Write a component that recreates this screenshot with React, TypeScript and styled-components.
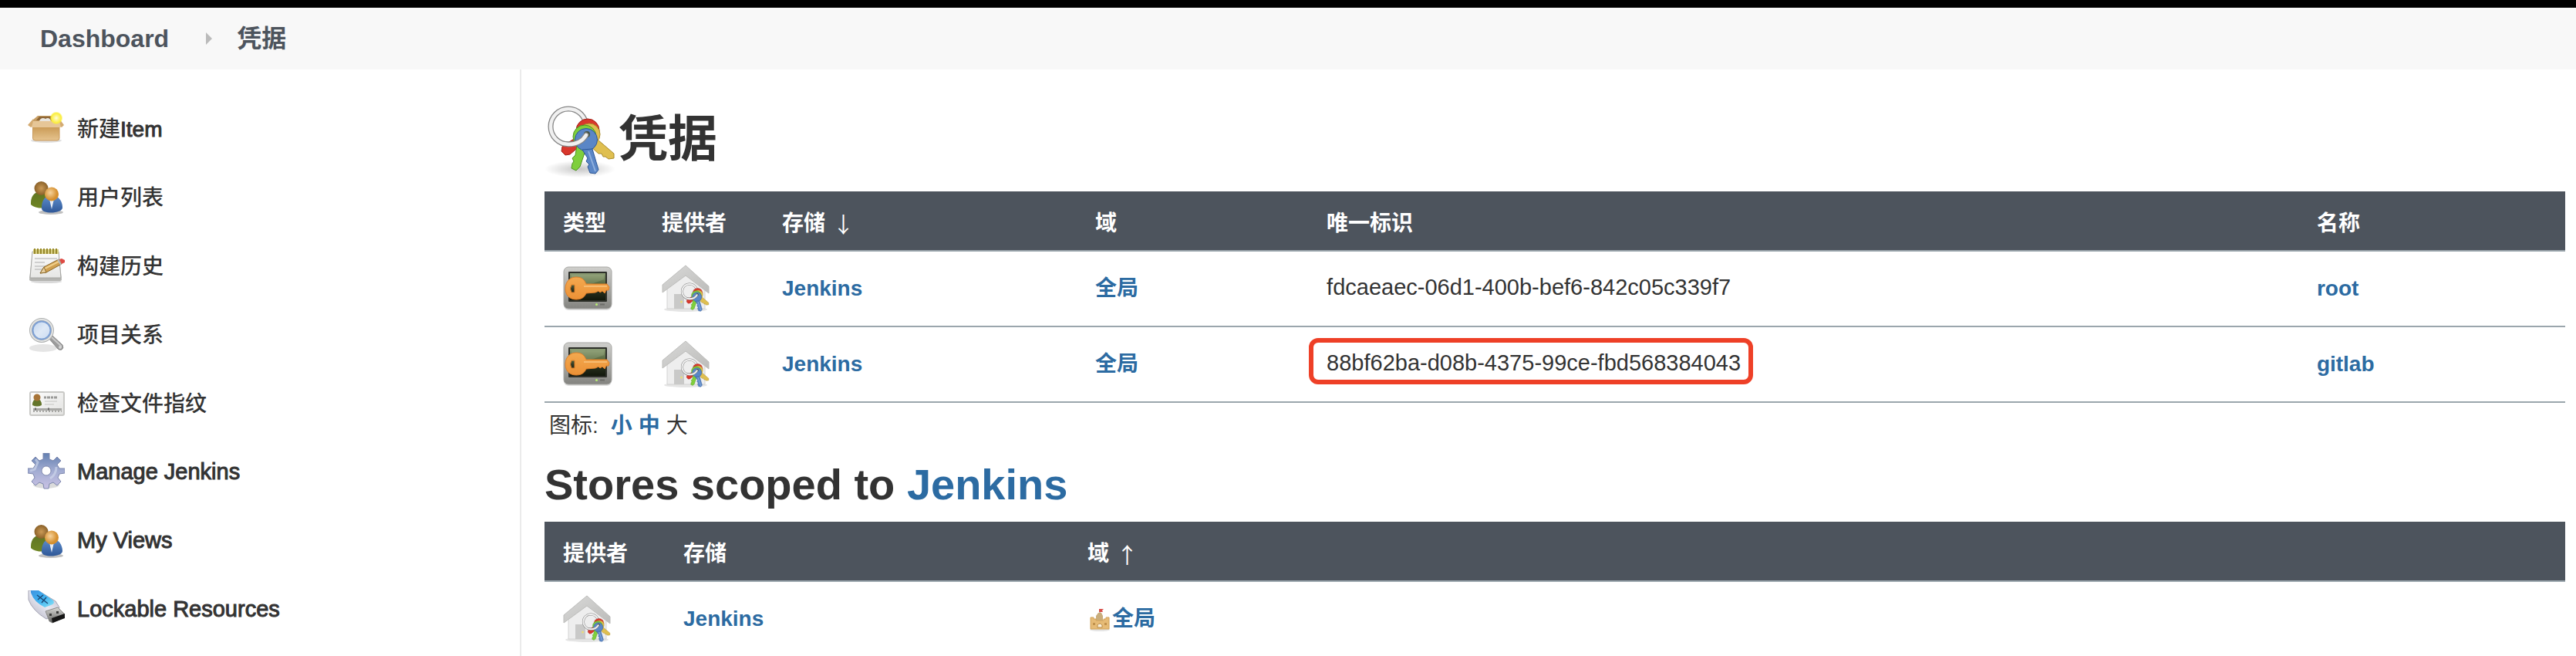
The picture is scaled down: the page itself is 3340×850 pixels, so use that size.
import React from "react";
import styled, { createGlobalStyle } from "styled-components";

const color = {
  text: "#333333",
  slate: "#4d545d",
  link: "#2c6ba2",
  rule: "#9ba6ad",
  mark: "#ee4027",
};

const GlobalStyle = createGlobalStyle`
  *, *::before, *::after { box-sizing: border-box; }
  body {
    margin: 0;
    background: #fff;
    color: ${color.text};
    font-family: "Liberation Sans", "Noto Sans CJK SC", sans-serif;
    font-size: 28px;
    line-height: 40px;
  }
  svg { display: block; flex: none; }
`;

const Page = styled.div`
  min-height: 100vh;
  display: flex;
  flex-direction: column;
  border-top: 10px solid #000;
`;

const Breadcrumbs = styled.nav`
  height: 80px;
  padding: 0 52px;
  display: flex;
  align-items: center;
  background: #f8f8f8;
  font-size: 32px;
  font-weight: 700;
`;

const Crumb = styled.a`
  color: ${color.slate};
  text-decoration: none;
`;

const CrumbArrow = styled.svg`
  margin: 0 32px 0 48px;
`;

const Body = styled.div`
  flex: 1;
  display: flex;
`;

const Sidebar = styled.nav`
  flex: none;
  width: 676px;
  padding: 52px 36px 0;
  display: flex;
  flex-direction: column;
  gap: 41px;
  border-right: 2px solid #ebebeb;
`;

const Task = styled.a`
  height: 48px;
  display: flex;
  align-items: center;
  gap: 16px;
  color: ${color.text};
  font-weight: 500;
  text-decoration: none;
`;

const HanLabel = styled.span`
  padding-top: 4px;
`;

const LatinLabel = styled.span`
  font-size: 29px;
  -webkit-text-stroke: 1px ${color.text};
`;

const LatinWord = styled.span`
  -webkit-text-stroke: 1px ${color.text};
`;

const Main = styled.main`
  flex: 1;
  min-width: 0;
  padding: 44px 14px 0 30px;
`;

const Title = styled.h1`
  margin: 0 0 18px;
  height: 96px;
  display: flex;
  align-items: center;
  font-size: 64px;
  line-height: 92px;
`;

const TitleText = styled.span`
  padding-bottom: 4px;
`;

const Subtitle = styled.h2`
  margin: 0 0 16px;
  font-size: 56px;
  line-height: 64px;
`;

const Link = styled.a`
  color: ${color.link};
  font-weight: 700;
  text-decoration: none;
`;

const DataTable = styled.table`
  width: 100%;
  table-layout: fixed;
  border-collapse: separate;
  border-spacing: 0;
`;

const Column = styled.col<{ $width?: string }>`
  width: ${(p) => p.$width ?? "auto"};
`;

const HeadCell = styled.th`
  height: 78px;
  padding: 8px 24px 0;
  background: ${color.slate};
  border-bottom: 2px solid ${color.rule};
  text-align: left;
  white-space: nowrap;
`;

const SortLink = styled.a`
  display: inline-flex;
  align-items: center;
  gap: 18px;
  color: #fff;
  text-decoration: none;
`;

const SortArrow = styled.span`
  width: 11px;
  display: flex;
  justify-content: center;
  font-family: "Noto Sans CJK SC", sans-serif;
  font-weight: 400;
`;

const Cell = styled.td`
  padding: 16px 24px;
  border-bottom: 2px solid ${color.rule};
  white-space: nowrap;
`;

const CredentialId = styled.span<{ $marked?: boolean }>`
  position: relative;
  display: block;
  width: fit-content;
  padding-bottom: 4px;
  font-size: 29px;
  ${(p) =>
    p.$marked &&
    `&::after {
      content: "";
      position: absolute;
      inset: -12px -16px -4px -23px;
      border: 6px solid ${color.mark};
      border-radius: 12px;
    }`}
`;

const DomainLink = styled(Link)`
  display: flex;
  align-items: center;
`;

const IconSizes = styled.div`
  padding: 10px 6px 24px;
  display: flex;
  gap: 8px;
`;

const IconSizesLabel = styled.span`
  margin-right: 8px;
`;

/* ---------- icons ---------- */

const BoxIcon = () => (
  <svg width="48" height="48" viewBox="0 0 48 48">
    <defs>
      <linearGradient id="boxFront" x1="0" y1="0" x2="0" y2="1">
        <stop offset="0" stopColor="#c4924a" />
        <stop offset="1" stopColor="#e6c48f" />
      </linearGradient>
      <radialGradient id="boxSun">
        <stop offset="0" stopColor="#fffde0" />
        <stop offset="0.35" stopColor="#fdf58a" />
        <stop offset="0.75" stopColor="#fbee3c" />
        <stop offset="1" stopColor="#fbee3c" stopOpacity="0" />
      </radialGradient>
    </defs>
    <ellipse cx="24" cy="40" rx="20" ry="3" fill="#000" opacity="0.12" />
    <path d="M7 13 L13 8 H35 L41 13 V20 H7 Z" fill="#c79e64" />
    <path d="M11 14 L15 9 H33 L37 14 Z" fill="#8e6636" />
    <path d="M15 15 c1-4 5-5 8-3 c3-2 6-1 7 3 z" fill="#e9e6df" />
    <path d="M6.500 19 H41 V37 Q41 40 38 40 H10 Q6.500 40 6.500 37 Z" fill="url(#boxFront)" stroke="#c99a5c" />
    <path d="M7 12 L0 20 L4 23 L8 20 Z" fill="#d4ab71" />
    <path d="M41 12 L47 20 L44 23 L39 20 Z" fill="#d4ab71" />
    <path d="M7 15 H41 L43 23 H5 Z" fill="#e6c697" />
    <circle cx="37" cy="11" r="8.500" fill="url(#boxSun)" />
  </svg>
);

const PeopleIcon = () => (
  <svg width="48" height="48" viewBox="0 0 48 48">
    <defs>
      <radialGradient id="manHead" cx="0.5" cy="0.5">
        <stop offset="0" stopColor="#cb9a56" />
        <stop offset="1" stopColor="#8a6129" />
      </radialGradient>
      <radialGradient id="ladyHead" cx="0.4" cy="0.4">
        <stop offset="0" stopColor="#f7d49d" />
        <stop offset="1" stopColor="#d58f2e" />
      </radialGradient>
      <linearGradient id="manCoat" x1="0" y1="0" x2="0" y2="1">
        <stop offset="0" stopColor="#5f7423" />
        <stop offset="1" stopColor="#6f8523" />
      </linearGradient>
      <linearGradient id="ladyCoat" x1="0" y1="0" x2="0" y2="1">
        <stop offset="0" stopColor="#5f8fce" />
        <stop offset="1" stopColor="#2e5797" />
      </linearGradient>
    </defs>
    <ellipse cx="30" cy="44" rx="16" ry="3" fill="#000" opacity="0.25" />
    <path d="M4 32 C4 22 10 17 18 17 C27 17 30 24 30 30 V37 C22 40 8 39 4 34 Z" fill="url(#manCoat)" />
    <circle cx="17.500" cy="13" r="9" fill="url(#manHead)" />
    <path d="M18 38 C18 28 23 22 31 22 C40 22 45 30 45 38 C45 46 18 47 18 39 Z" fill="url(#ladyCoat)" />
    <path d="M28 27 H34 L31 40 Z" fill="#e6ecf5" />
    <circle cx="31" cy="20.500" r="9" fill="url(#ladyHead)" />
  </svg>
);

const NotepadIcon = () => (
  <svg width="48" height="48" viewBox="0 0 48 48">
    <defs>
      <linearGradient id="padSheet" x1="0" y1="0" x2="0" y2="1">
        <stop offset="0" stopColor="#fbfbfb" />
        <stop offset="1" stopColor="#e6e6e4" />
      </linearGradient>
    </defs>
    <ellipse cx="24" cy="45" rx="20" ry="2" fill="#000" opacity="0.15" />
    <path d="M6 6 H40 L44 42 Q44 44 42 44 H4 Q2 44 2 42 Z" fill="#b4b4b1" />
    <path d="M6 6 H40 L43 40 H3 Z" fill="url(#padSheet)" stroke="#a5a5a2" />
    <path d="M9 15 H38 M9 20 H22 M9 25 H24 M9 29 H20" stroke="#c3c3c3" strokeWidth="1.500" />
    <rect x="7" y="3" width="33" height="6" fill="#d8cf83" />
    <path d="M9 2 V9 M13 2 V9 M17 2 V9 M21 2 V9 M25 2 V9 M29 2 V9 M33 2 V9 M37 2 V9" stroke="#97892c" strokeWidth="2" />
    <path d="M16 34 L21 26 L40 16 L44 22 L24 33 Z" fill="#d0a050" stroke="#8d6a2c" />
    <path d="M22 28 L40 19" stroke="#f0cf8a" strokeWidth="2" />
    <path d="M16 34 L21 26 L24 33 Z" fill="#e8cf9f" stroke="#8d6a2c" />
    <path d="M41 16 L44 15 L48 17 L48 20 L44 22 Z" fill="#de4a43" />
    <path d="M39 16 L43 23" stroke="#b9bbbe" strokeWidth="2" />
  </svg>
);

const SearchIcon = () => (
  <svg width="48" height="48" viewBox="0 0 48 48">
    <defs>
      <linearGradient id="lens" x1="0" y1="0" x2="1" y2="1">
        <stop offset="0" stopColor="#b9d0ee" />
        <stop offset="0.5" stopColor="#dfe9f6" />
        <stop offset="1" stopColor="#c5d8f1" />
      </linearGradient>
    </defs>
    <ellipse cx="20" cy="42" rx="18" ry="5" fill="#000" opacity="0.1" />
    <path d="M27 29 L32 26 L45 38 Q47 42 44 44 Q41 45 39 43 Z" fill="#9c9c9c" stroke="#868686" />
    <path d="M31 28 L44 40" stroke="#c9c9c9" strokeWidth="2" />
    <circle cx="42" cy="41" r="2" fill="#d4d4d4" />
    <circle cx="18" cy="19" r="14" fill="url(#lens)" stroke="#aeb0b0" strokeWidth="4" />
    <circle cx="18" cy="19" r="14" fill="none" stroke="#e4e5e4" strokeWidth="2" />
    <circle cx="18" cy="19" r="11.500" fill="none" stroke="#7c9fd4" strokeWidth="2" />
  </svg>
);

const IdCardIcon = () => (
  <svg width="48" height="48" viewBox="0 0 48 48">
    <defs>
      <linearGradient id="card" x1="0" y1="0" x2="1" y2="1">
        <stop offset="0" stopColor="#fdfdfd" />
        <stop offset="1" stopColor="#e2e2e0" />
      </linearGradient>
    </defs>
    <rect x="3" y="10" width="44" height="30" rx="2" fill="url(#card)" stroke="#c9c9c6" strokeWidth="2" />
    <path d="M6 27 Q6 19 12 19 Q18 19 18 27 Q12 30 6 27 Z" fill="#63752a" />
    <circle cx="12" cy="17" r="4.500" fill="#a77438" />
    <path d="M21 17 H38" stroke="#9a9a98" strokeWidth="3" strokeDasharray="3 1 4 1" />
    <path d="M22 22 H38 M22 26 H34" stroke="#d2d2cf" strokeWidth="1.500" />
    <path d="M7 32.500 H44" stroke="#a9a9a6" strokeWidth="3" />
    <path d="M7 35 H44" stroke="#a9a9a6" strokeWidth="2" strokeDasharray="2 2" />
    <path d="M9 32 H11 M26 32 H28" stroke="#6c6c6a" strokeWidth="3" />
  </svg>
);

const GearIcon = () => (
  <svg width="48" height="48" viewBox="0 0 48 48">
    <defs>
      <linearGradient id="gear" x1="0" y1="0" x2="0" y2="1">
        <stop offset="0" stopColor="#6380b0" />
        <stop offset="0.5" stopColor="#a2acd2" />
        <stop offset="1" stopColor="#c9c2e4" />
      </linearGradient>
    </defs>
    <ellipse cx="24" cy="41" rx="17" ry="5" fill="#000" opacity="0.14" />
    <path
      d="M20 0 H28 L28 8 L33 10 L38 5 L43 10 L38 15 L41 20 L48 20 V26 L41 27 L39 32 L43 37 L38 42 L33 38 L28 40 L27 46 H21 L20 40 L15 38 L10 42 L5 37 L9 32 L7 27 L0 26 V20 L7 20 L10 15 L5 10 L10 5 L15 10 L20 8 Z M24 17 a6 6 0 1 0 0.010 0 Z"
      fill="url(#gear)"
      stroke="#7d87ad"
      fillRule="evenodd"
      strokeLinejoin="round"
    />
    <path d="M10 8 L13 12 Q11 17 9 21 L3 23 M29 33 Q37 28 37 18" fill="none" stroke="#d3dcef" strokeWidth="3" opacity="0.6" />
  </svg>
);

const UsbIcon = () => (
  <svg width="48" height="48" viewBox="0 0 48 48">
    <defs>
      <linearGradient id="usbBody" x1="0" y1="1" x2="1" y2="0">
        <stop offset="0" stopColor="#a9a9ba" />
        <stop offset="0.5" stopColor="#e9e9f2" />
        <stop offset="1" stopColor="#b9b9c8" />
      </linearGradient>
      <linearGradient id="usbScreen" x1="0" y1="0" x2="1" y2="1">
        <stop offset="0" stopColor="#3f93e0" />
        <stop offset="0.5" stopColor="#3fb2f0" />
        <stop offset="1" stopColor="#8be4f7" />
      </linearGradient>
      <linearGradient id="usbPlug" x1="0" y1="0" x2="0" y2="1">
        <stop offset="0" stopColor="#d9d9d6" />
        <stop offset="1" stopColor="#5f5f5d" />
      </linearGradient>
    </defs>
    <path d="M1 0 H13 L36 14 L41 22 L38 30 L24 37 Q6 26 1 12 Z" fill="url(#usbBody)" stroke="#a3a3b3" />
    <path d="M4 0 H14 L33 13 Q36 17 30 19 L22 22 Q8 15 4 3 Z" fill="url(#usbScreen)" />
    <path d="M12 6 L26 17 M13 12 L20 6 M18 16 L24 9" stroke="#1d4a76" strokeWidth="1.500" />
    <path d="M23 27 L39 22 L48 31 V35 L32 42 L28 40 Z" fill="url(#usbPlug)" stroke="#8a8a88" />
    <path d="M31 36 L48 30 V36 L32 42 Z" fill="#151515" />
    <path d="M28 30 h3 v3 h-3z M37 27 h3 v3 h-3z" fill="#3b3b3a" />
  </svg>
);

/* Ring of four keys on a 96 unit square, shared by the title and the house. */
const KeyRing = () => (
  <g strokeLinejoin="round">
    <circle cx="31" cy="30" r="23" fill="none" stroke="#858585" strokeWidth="7" />
    <circle cx="31" cy="30" r="23" fill="none" stroke="#f0f0f0" strokeWidth="4.500" />
    <g fill="#d9372c" stroke="#a32018">
      <circle cx="56" cy="35" r="15" />
      <path d="M44 42 L52 50 L33 66 L27 67 L22 62 L23 56 Z" />
    </g>
    <g fill="#dfbf50" stroke="#a88a2a">
      <circle cx="58" cy="40" r="14" />
      <path d="M59 55 L69 47 L90 65 L90 71 L83 72 L79 69 L76 69 L74 65 L70 65 Z" />
    </g>
    <g fill="#7fcf3c" stroke="#4d9420">
      <circle cx="52" cy="43" r="15" />
      <path d="M42 54 L54 58 L46 82 L41 87 L35 84 L36 78 L38 75 L36 71 L40 67 Z" />
    </g>
    <g fill="#5a86c6" stroke="#2c5796">
      <circle cx="54" cy="47" r="14.500" />
      <path d="M49 60 L62 59 L70 86 L66 91 L59 90 L56 82 L58 79 L54 75 L56 71 Z" />
    </g>
    <path d="M57 62 L66 88" stroke="#8fb0de" strokeWidth="2" />
    <circle cx="55" cy="40" r="4" fill="#47533f" />
    <path d="M54 41 Q47 53 31 53 L26 52.500" fill="none" stroke="#858585" strokeWidth="7" strokeLinecap="round" />
    <path d="M54 41 Q47 53 31 53 L24 52" fill="none" stroke="#f0f0f0" strokeWidth="4.500" strokeLinecap="round" />
  </g>
);

const KeysIcon = () => (
  <svg width="96" height="96" viewBox="0 0 96 96">
    <defs>
      <radialGradient id="keysShadow">
        <stop offset="0" stopColor="#000" stopOpacity="0.22" />
        <stop offset="1" stopColor="#000" stopOpacity="0" />
      </radialGradient>
    </defs>
    <ellipse cx="46" cy="85" rx="46" ry="11" fill="url(#keysShadow)" />
    <KeyRing />
  </svg>
);

const TerminalKeyIcon = () => (
  <svg width="64" height="64" viewBox="0 0 64 64" role="img" aria-label="用户名和密码">
    <defs>
      <linearGradient id="termCase" x1="0" y1="0" x2="0" y2="1">
        <stop offset="0" stopColor="#cfcfcc" />
        <stop offset="0.7" stopColor="#9b9b97" />
        <stop offset="1" stopColor="#83837f" />
      </linearGradient>
      <linearGradient id="termScreen" x1="0" y1="0" x2="0" y2="1">
        <stop offset="0" stopColor="#8d9e76" />
        <stop offset="0.4" stopColor="#55663f" />
        <stop offset="0.6" stopColor="#2b3420" />
        <stop offset="1" stopColor="#12180c" />
      </linearGradient>
      <linearGradient id="termKey" x1="0" y1="0" x2="0" y2="1">
        <stop offset="0" stopColor="#f3a94f" />
        <stop offset="1" stopColor="#ec9136" />
      </linearGradient>
    </defs>
    <rect x="1" y="6" width="62" height="54" rx="6" fill="#000" opacity="0.12" />
    <rect x="1" y="4" width="62" height="54" rx="6" fill="url(#termCase)" stroke="#a7a7a4" />
    <rect x="7" y="10" width="50" height="39" rx="1" fill="#2d2f29" />
    <rect x="9" y="12" width="46" height="35" fill="url(#termScreen)" />
    <path d="M11 14 H53 V20 Q38 26 28 28 H11 Z" fill="#a9b98e" opacity="0.3" />
    <circle cx="43.500" cy="52.500" r="1.500" fill="#b7ef72" />
    <path d="M48 52.500 H54" stroke="#6d6d69" strokeWidth="2" />
    <path d="M17 17 C25 17 28 21 30 26 H57 L60 30 L59 34 H56 L54 38 L51 35 L48 37 L46 35 L42 37 L30 38 C28 43 24 46 17 46 C8 46 3 40 3 32 C3 23 9 17 17 17 Z M11 27 Q8 32 11 37 H15 V27 Z" fill="url(#termKey)" stroke="#e0802a" fillRule="evenodd" />
    <path d="M27 29 H57" stroke="#f7bb70" strokeWidth="2" />
  </svg>
);

const HouseKeysIcon = () => (
  <svg width="64" height="64" viewBox="0 0 64 64" role="img" aria-label="Jenkins 凭据提供者">
    <defs>
      <linearGradient id="roof" x1="0" y1="0" x2="1" y2="1">
        <stop offset="0" stopColor="#d9d9d8" />
        <stop offset="1" stopColor="#bcbcba" />
      </linearGradient>
    </defs>
    <ellipse cx="31" cy="59" rx="28" ry="3" fill="#000" opacity="0.1" />
    <path d="M7 30 L32 9 L56 30 V58 H7 Z" fill="#eeeeee" stroke="#d3d3d2" />
    <rect x="16" y="39" width="13" height="19" fill="#c9c9c8" />
    <circle cx="25.500" cy="49" r="1.500" fill="#e8dc7a" />
    <path d="M31 2 L61 29 V38 L31 15 L1 37 V27 Z" fill="url(#roof)" stroke="#bdbdbb" strokeLinejoin="round" />
    <g transform="translate(23 23) scale(0.420)">
      <KeyRing />
    </g>
  </svg>
);

const CastleIcon = () => (
  <svg width="32" height="32" viewBox="0 0 32 32">
    <ellipse cx="16" cy="30" rx="13" ry="2" fill="#000" opacity="0.1" />
    <path d="M16 10 V3" stroke="#9c8a6c" strokeWidth="1" />
    <path d="M15 3 H21 L19 5 L20 7 H15 Z" fill="#d8504a" />
    <path d="M11 20 V12 L14 8 H18 L20 12 V20 Z" fill="#c9ad7c" />
    <path d="M4 14 H8 V16 H11 V18 H21 V16 H24 V14 H28 V29 H4 Z" fill="#e6bb76" stroke="#d0a25a" />
    <path d="M13 27 V24 Q16 20 19 24 V27 Z" fill="#fbf1dc" stroke="#b98a46" />
    <path d="M7 21 h3 v3 h-3z M22 21 h3 v3 h-3z" fill="#c1924e" />
  </svg>
);

/* ---------- data ---------- */

const tasks: { icon: React.ReactNode; label: React.ReactNode }[] = [
  { icon: <BoxIcon />, label: <HanLabel>新建<LatinWord>Item</LatinWord></HanLabel> },
  { icon: <PeopleIcon />, label: <HanLabel>用户列表</HanLabel> },
  { icon: <NotepadIcon />, label: <HanLabel>构建历史</HanLabel> },
  { icon: <SearchIcon />, label: <HanLabel>项目关系</HanLabel> },
  { icon: <IdCardIcon />, label: <HanLabel>检查文件指纹</HanLabel> },
  { icon: <GearIcon />, label: <LatinLabel>Manage Jenkins</LatinLabel> },
  { icon: <PeopleIcon />, label: <LatinLabel>My Views</LatinLabel> },
  { icon: <UsbIcon />, label: <LatinLabel>Lockable Resources</LatinLabel> },
];

const credentials = [
  { id: "fdcaeaec-06d1-400b-bef6-842c05c339f7", name: "root", marked: false },
  { id: "88bf62ba-d08b-4375-99ce-fbd568384043", name: "gitlab", marked: true },
];

const Heading = ({ label, arrow }: { label: string; arrow?: string }) => (
  <HeadCell scope="col">
    <SortLink href="#">
      {label}
      {arrow && <SortArrow>{arrow}</SortArrow>}
    </SortLink>
  </HeadCell>
);

export default function App() {
  return (
    <Page lang="zh-CN">
      <GlobalStyle />
      <Breadcrumbs aria-label="breadcrumb">
        <Crumb href="#">Dashboard</Crumb>
        <CrumbArrow width="8" height="16" viewBox="0 0 8 16">
          <path d="M0 0 L8 8 L0 16 Z" fill="#bbbbbb" />
        </CrumbArrow>
        <Crumb href="#">凭据</Crumb>
      </Breadcrumbs>
      <Body>
        <Sidebar>
          {tasks.map((t, i) => (
            <Task key={i} href="#">
              {t.icon}
              {t.label}
            </Task>
          ))}
        </Sidebar>
        <Main>
          <Title>
            <KeysIcon />
            <TitleText>凭据</TitleText>
          </Title>
          <DataTable>
            <colgroup>
              <Column $width="128px" />
              <Column $width="156px" />
              <Column $width="15.5%" />
              <Column $width="11.45%" />
              <Column $width="49%" />
              <Column />
            </colgroup>
            <thead>
              <tr>
                <Heading label="类型" />
                <Heading label="提供者" />
                <Heading label="存储" arrow="↓" />
                <Heading label="域" />
                <Heading label="唯一标识" />
                <Heading label="名称" />
              </tr>
            </thead>
            <tbody>
              {credentials.map((c) => (
                <tr key={c.id}>
                  <Cell><TerminalKeyIcon /></Cell>
                  <Cell><HouseKeysIcon /></Cell>
                  <Cell><Link href="#">Jenkins</Link></Cell>
                  <Cell><Link href="#">全局</Link></Cell>
                  <Cell><CredentialId $marked={c.marked}>{c.id}</CredentialId></Cell>
                  <Cell><Link href="#">{c.name}</Link></Cell>
                </tr>
              ))}
            </tbody>
          </DataTable>
          <IconSizes>
            <IconSizesLabel>图标:</IconSizesLabel>
            <Link href="#">小</Link>
            <Link href="#">中</Link>
            <span>大</span>
          </IconSizes>
          <Subtitle>
            Stores scoped to <Link href="#">Jenkins</Link>
          </Subtitle>
          <DataTable>
            <colgroup>
              <Column $width="156px" />
              <Column $width="20%" />
              <Column />
            </colgroup>
            <thead>
              <tr>
                <Heading label="提供者" />
                <Heading label="存储" />
                <Heading label="域" arrow="↑" />
              </tr>
            </thead>
            <tbody>
              <tr>
                <Cell><HouseKeysIcon /></Cell>
                <Cell><Link href="#">Jenkins</Link></Cell>
                <Cell>
                  <DomainLink href="#">
                    <CastleIcon />
                    全局
                  </DomainLink>
                </Cell>
              </tr>
            </tbody>
          </DataTable>
        </Main>
      </Body>
    </Page>
  );
}
